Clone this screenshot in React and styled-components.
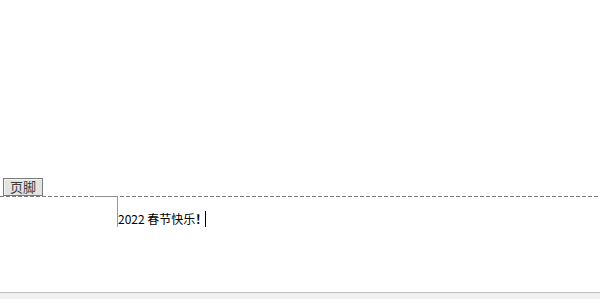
import React from "react";
import styled, { createGlobalStyle } from "styled-components";

const Global = createGlobalStyle`
  html, body {
    margin: 0;
    padding: 0;
    background: #ffffff;
  }
  body {
    font-family: "Liberation Sans", "Noto Sans CJK SC", sans-serif;
  }
`;

const Page = styled.div`
  height: 100vh;
  display: flex;
  flex-direction: column;
  overflow: hidden;
`;

const Editor = styled.div`
  flex: 1;
  display: flex;
  flex-direction: column;
  padding-top: 178px;
`;

const Boundary = styled.div`
  display: flex;
  align-items: flex-end;
  padding-left: 3px;
  height: 18px;
  padding-bottom: 1px;
  background: repeating-linear-gradient(
      to right,
      #7c7c7c 0 4px,
      transparent 4px 6px
    )
    bottom / 100% 1px no-repeat;
`;

const Tag = styled.span`
  box-sizing: border-box;
  height: 18px;
  padding: 0 6px;
  border: 1px solid #7a7a7a;
  background: #e3e3e3;
  box-shadow: inset 1px 1px 0 #f4f4f4;
  color: #3a3a3a;
  font-family: "Noto Sans CJK SC", sans-serif;
  font-size: 13px;
  line-height: 15px;
  -webkit-font-smoothing: antialiased;
`;

const FooterBody = styled.div`
  position: relative;
  padding-left: 117px;
`;

const Line = styled.p`
  position: relative;
  margin: 0;
  padding: 14px 0 0 0;
  border-left: 1px solid #9a9a9a;
  font-family: "Noto Sans CJK SC", sans-serif;
  font-size: 12px;
  line-height: 16px;
  color: #000000;
  display: flex;
  align-items: center;

  &::before {
    content: "";
    position: absolute;
    top: -1px;
    left: -23px;
    width: 23px;
    height: 1px;
    background: #8e8e8e;
  }
`;

const Bang = styled.span`
  font-weight: 700;
`;

const Caret = styled.span`
  display: inline-block;
  width: 1px;
  height: 16px;
  margin-left: -2px;
  background: #000000;
`;

const StatusBar = styled.div`
  height: 6px;
  border-top: 1px solid #bdbdbd;
  background: #f0f0f0;
`;

export default function App() {
  return (
    <Page>
      <Global />
      <Editor>
        <Boundary>
          <Tag>页脚</Tag>
        </Boundary>
        <FooterBody>
          <Line>
            2022 春节快乐<Bang>！</Bang>
            <Caret />
          </Line>
        </FooterBody>
      </Editor>
      <StatusBar />
    </Page>
  );
}
